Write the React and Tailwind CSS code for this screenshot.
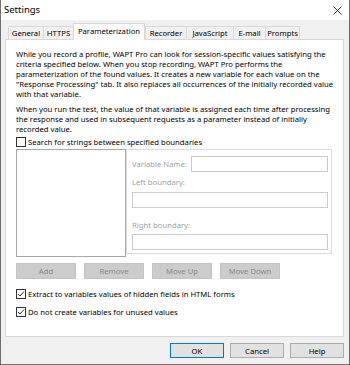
import React from "react";

const tabs = [
  { label: "General", w: "w-[35px]" },
  { label: "HTTPS", w: "w-[30px]" },
  { label: "Parameterization", w: "w-[72px]", active: true },
  { label: "Recorder", w: "w-[41px]" },
  { label: "JavaScript", w: "w-[47px]" },
  { label: "E-mail", w: "w-[32px]" },
  { label: "Prompts", w: "w-[35px]" },
];

function CheckBox({ checked }) {
  return (
    <span className="w-[10px] h-[10px] shrink-0 border border-[#333333] bg-white flex items-center justify-center">
      {checked && (
        <svg width="8" height="8" viewBox="0 0 8 8">
          <path d="M1 4 L3 6 L7 1.5" fill="none" stroke="#333333" strokeWidth="1" />
        </svg>
      )}
    </span>
  );
}

function CheckRow({ checked, children, className = "" }) {
  return (
    <div className={`flex items-center gap-[2px] h-[10px] ${className}`}>
      <CheckBox checked={checked} />
      <span className="leading-[10px] whitespace-nowrap">{children}</span>
    </div>
  );
}

function DisabledButton({ children, w }) {
  return (
    <div className={`${w} h-[16px] bg-[#cccccc] border border-[#c4c4c4] text-[#8a8a8a] flex items-center justify-center`}>
      {children}
    </div>
  );
}

function DialogButton({ children, primary }) {
  return (
    <div
      className={`w-[54px] h-[15px] bg-[#e1e1e1] border flex items-center justify-center ${
        primary ? "border-[#0078d7]" : "border-[#adadad]"
      }`}
    >
      {children}
    </div>
  );
}

export default function App() {
  return (
    <div
      className="w-[350px] h-[365px] bg-[#f0f0f0] border-x border-b border-[#6f6f6f] flex flex-col text-black text-[7.7px] leading-[10px]"
      style={{ fontFamily: '"Noto Sans", "Open Sans", sans-serif' }}
    >
      {/* title bar */}
      <div className="h-[20px] bg-white flex items-center justify-between pl-[3px] pr-[6px] shrink-0">
        <span className="text-[9.5px]">Settings</span>
        <svg width="9" height="9" viewBox="0 0 9 9" className="mr-[1px]">
          <path d="M0.5 0.5 L8.5 8.5 M8.5 0.5 L0.5 8.5" stroke="#222" strokeWidth="0.9" />
        </svg>
      </div>

      <div className="flex-1 flex flex-col pl-[4px] pr-[5px] pt-[3px]">
        {/* tabs */}
        <div className="relative z-10 flex items-end h-[16px] pl-[3px]">
          {tabs.map((t) =>
            t.active ? (
              <div
                key={t.label}
                className={`${t.w} h-[17px] -mb-[1px] bg-white border-x border-t border-[#d9d9d9] flex items-start justify-center pt-[2px] whitespace-nowrap`}
              >
                {t.label}
              </div>
            ) : (
              <div
                key={t.label}
                className={`${t.w} h-[13px] bg-[#f0f0f0] border-t border-l last:border-r border-[#d9d9d9] flex items-center justify-center whitespace-nowrap`}
              >
                {t.label}
              </div>
            )
          )}
        </div>

        {/* page */}
        <div className="h-[298px] bg-white border border-[#d9d9d9] pl-[10px] pt-[9px]">
          <div className="whitespace-nowrap">
            <div>While you record a profile, WAPT Pro can look for session-specific values satisfying the</div>
            <div>criteria specified below. When you stop recording, WAPT Pro performs the</div>
            <div>parameterization of the found values. It creates a new variable for each value on the</div>
            <div>"Response Processing" tab. It also replaces all occurrences of the initially recorded value</div>
            <div>with that variable.</div>
          </div>
          <div className="whitespace-nowrap mt-[5px]">
            <div>When you run the test, the value of that variable is assigned each time after processing</div>
            <div>the response and used in subsequent requests as a parameter instead of initially</div>
            <div>recorded value.</div>
          </div>

          <CheckRow className="mt-[3px]">Search for strings between specified boundaries</CheckRow>

          <div className="flex mt-[2px]">
            <div className="w-[110px] h-[108px] border border-[#a8a8a8] bg-white" />
            <div className="w-[206px] h-[105px] border border-[#dcdcdc] pl-[5px] pr-[3px] pt-[6px] text-[#a0a0a0]">
              <div className="flex items-center justify-between">
                <span className="whitespace-nowrap">Variable Name:</span>
                <div className="w-[137px] h-[16px] border border-[#cccccc]" />
              </div>
              <div className="mt-[5px]">Left boundary:</div>
              <div className="mt-[5px] h-[16px] border border-[#cccccc]" />
              <div className="mt-[12px]">Right boundary:</div>
              <div className="mt-[4px] h-[16px] border border-[#cccccc]" />
            </div>
          </div>

          <div className="flex gap-[8px] mt-[6px]">
            <DisabledButton w="w-[60px]">Add</DisabledButton>
            <DisabledButton w="w-[60px]">Remove</DisabledButton>
            <DisabledButton w="w-[60px]">Move Up</DisabledButton>
            <DisabledButton w="w-[60px]">Move Down</DisabledButton>
          </div>

          <CheckRow checked className="mt-[10px]">Extract to variables values of hidden fields in HTML forms</CheckRow>
          <CheckRow checked className="mt-[8px]">Do not create variables for unused values</CheckRow>
        </div>

        {/* dialog buttons */}
        <div className="flex justify-end gap-[6px] mt-[6px]">
          <DialogButton primary>OK</DialogButton>
          <DialogButton>Cancel</DialogButton>
          <DialogButton>Help</DialogButton>
        </div>
      </div>
    </div>
  );
}
